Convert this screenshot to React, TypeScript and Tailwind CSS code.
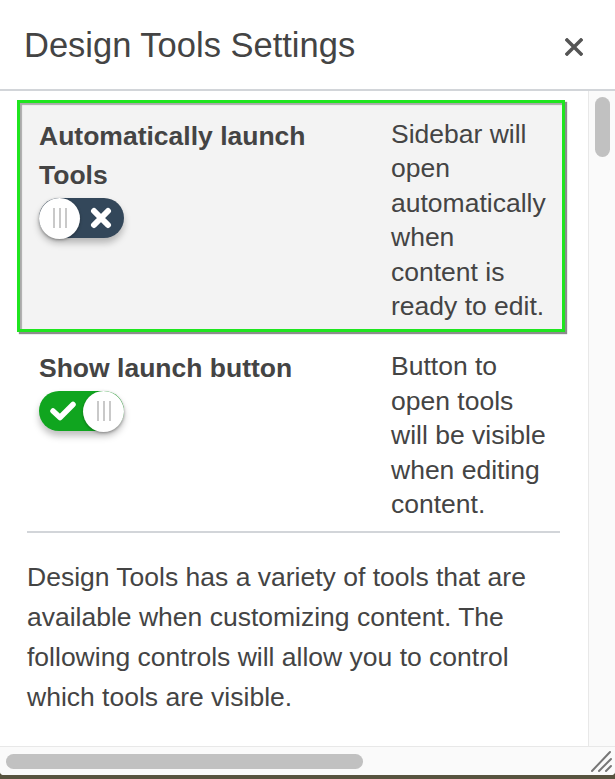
import React from "react";

const Toggle: React.FC<{ on: boolean }> = ({ on }) => {
  const knob = (
    <div className="w-[41px] h-[41px] rounded-full bg-white shadow-[0_1px_3px_rgba(0,0,0,0.35)] flex items-center justify-center gap-[4px] shrink-0">
      <span className="w-[2px] h-[20px] bg-[#c9c9c9]" />
      <span className="w-[2px] h-[20px] bg-[#c9c9c9]" />
      <span className="w-[2px] h-[20px] bg-[#c9c9c9]" />
    </div>
  );

  if (on) {
    return (
      <div className="w-[85px] h-[40px] rounded-full bg-[#10a51f] flex items-center justify-between shadow-[0_5px_7px_rgba(0,0,0,0.25)]">
        <svg width="26" height="20" viewBox="0 0 26 20" className="ml-[11px]">
          <path d="M3 10 L10 16.5 L23 3.5" fill="none" stroke="#fff" strokeWidth="5.5" strokeLinecap="round" strokeLinejoin="round" />
        </svg>
        {knob}
      </div>
    );
  }

  return (
    <div className="w-[85px] h-[40px] rounded-full bg-[#33475a] flex items-center justify-between shadow-[0_5px_7px_rgba(0,0,0,0.25)]">
      {knob}
      <svg width="22" height="22" viewBox="0 0 22 22" className="mr-[12px]">
        <path d="M4 4 L18 18 M18 4 L4 18" fill="none" stroke="#fff" strokeWidth="6" strokeLinecap="round" />
      </svg>
    </div>
  );
};

const SettingRow: React.FC<{
  label: string[];
  desc: string[];
  on: boolean;
  highlighted?: boolean;
}> = ({ label, desc, on, highlighted }) => (
  <div
    className={`w-[548px] flex pl-[19px] pr-[9px] pt-[14px] pb-[6px] border-[3px] ${
      highlighted
        ? "border-[#1fe51f] bg-[#f3f3f3] shadow-[2px_2px_1px_rgba(0,0,0,0.45),inset_2px_2px_1px_rgba(0,0,0,0.3)]"
        : "border-transparent"
    }`}
  >
    <div className="flex-1">
      <div className="text-[26.5px] leading-[39px] font-bold text-[#444]">
        {label.map((l, i) => (
          <div key={i}>{l}</div>
        ))}
      </div>
      <div className="mt-[3px]">
        <Toggle on={on} />
      </div>
    </div>
    <div className="w-[162px] text-[26.5px] leading-[34.4px] text-[#444]">
      {desc.map((d, i) => (
        <div key={i}>{d}</div>
      ))}
    </div>
  </div>
);

export default function App() {
  return (
    <div className="w-[615px] h-[779px] bg-[#57533f] overflow-hidden font-['Liberation_Sans',Arial,sans-serif]">
      <div className="h-[775px] bg-white flex flex-col rounded-b-[4px] overflow-hidden">
        <header className="h-[91px] shrink-0 border-b-2 border-[#d2d5d9] flex items-center justify-between pl-[24px] pr-[32px]">
          <h1 className="text-[34.5px] text-[#444] mt-[2px]">Design Tools Settings</h1>
          <svg width="18" height="18" viewBox="0 0 18 18" className="mt-[4px]">
            <path d="M2 2 L16 16 M16 2 L2 16" stroke="#555" strokeWidth="3.5" strokeLinecap="square" />
          </svg>
        </header>

        <div className="flex flex-1 min-h-0">
          <div className="w-[588px] overflow-hidden pt-[9px] pl-[17px]">
            <SettingRow
              highlighted
              on={false}
              label={["Automatically launch", "Tools"]}
              desc={["Sidebar will", "open", "automatically", "when", "content is", "ready to edit."]}
            />
            <SettingRow
              on={true}
              label={["Show launch button"]}
              desc={["Button to", "open tools", "will be visible", "when editing", "content."]}
            />
            <div className="ml-[10px] w-[533px] h-[2px] bg-[#d2d5d9] mt-[1px]" />
            <p className="pl-[10px] mt-[24px] text-[26.5px] leading-[40px] text-[#444]">
              Design Tools has a variety of tools that are
              <br />
              available when customizing content. The
              <br />
              following controls will allow you to control
              <br />
              which tools are visible.
            </p>
          </div>
          <div className="w-[27px] border-l border-[#e8e8e8] bg-[#fafafa] pt-[6px] pl-[6px]">
            <div className="w-[15px] h-[60px] rounded-full bg-[#c1c1c1]" />
          </div>
        </div>

        <div className="h-[29px] shrink-0 border-t border-[#e8e8e8] bg-[#fafafa] flex">
          <div className="w-[588px] pl-[6px] pt-[7px]">
            <div className="w-[357px] h-[15px] rounded-full bg-[#c1c1c1]" />
          </div>
          <div className="w-[27px] flex items-end justify-end pr-[3px] pb-[2px]">
            <svg width="22" height="24" viewBox="0 0 22 24">
              <path d="M2 22 L20 3 M9 22 L21 10 M16 22 L21 17" stroke="#777" strokeWidth="2" strokeLinecap="round" />
            </svg>
          </div>
        </div>
      </div>
    </div>
  );
}
